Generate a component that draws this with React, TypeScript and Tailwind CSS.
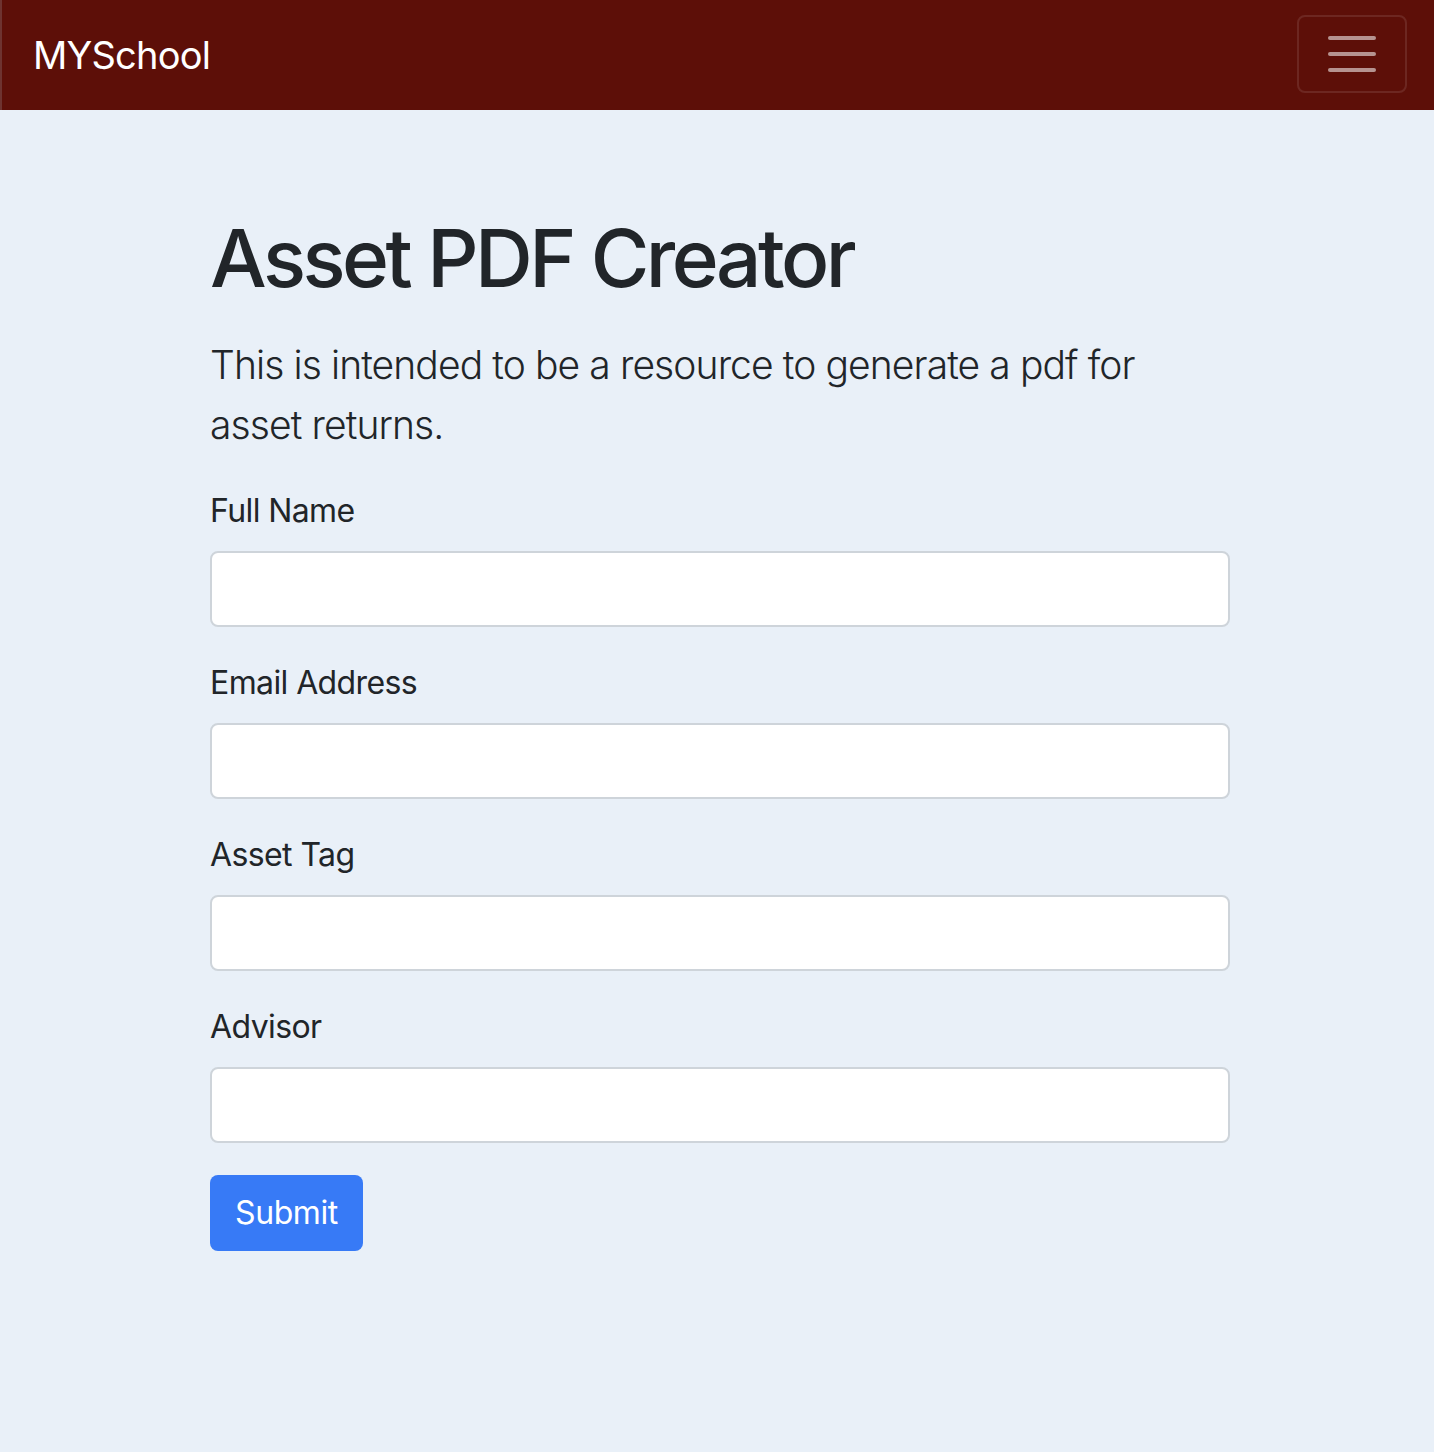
export default function App() {
  const fields = ['Full Name', 'Email Address', 'Asset Tag', 'Advisor'];

  return (
    <div className="min-h-screen bg-[#e9f0f8] text-[#212529] font-['Inter','Noto_Sans',sans-serif]">
      {/* Navbar */}
      <nav className="h-[110px] bg-[#5d0f08] border-l-2 border-[#6e3330] flex items-center justify-between pl-[31px] pr-[27px]">
        <span className="text-[38px] leading-none text-white tracking-[-0.8px]">MYSchool</span>
        <button className="w-[110px] h-[78px] -mt-[2px] rounded-[8px] border-2 border-white/10 flex flex-col items-center justify-center gap-[12px]">
          <span className="block w-[48px] h-[4px] rounded-full bg-white/55" />
          <span className="block w-[48px] h-[4px] rounded-full bg-white/55" />
          <span className="block w-[48px] h-[4px] rounded-full bg-white/55" />
        </button>
      </nav>

      {/* Main */}
      <main className="pl-[210px] pt-[100px] pb-[200px]">
        <div className="w-[1020px]">
          <h1 className="text-[80px] leading-[96px] font-medium tracking-[-3.5px] mb-[29px]">Asset PDF Creator</h1>
          <p className="max-w-[1000px] text-[39px] leading-[60px] font-light tracking-[-0.9px] mb-[32px]">
            This is intended to be a resource to generate a pdf for asset returns.
          </p>

          <form>
            {fields.map((f) => (
              <div key={f} className="mb-[32px]">
                <label className="block text-[32px] leading-[48px] mb-[16px] tracking-[-0.6px]">{f}</label>
                <input
                  type="text"
                  className="block w-full h-[76px] bg-white border-2 border-[#ced4da] rounded-[8px] px-[24px] text-[32px] outline-none"
                />
              </div>
            ))}
            <button
              type="button"
              className="h-[76px] px-[25px] rounded-[8px] bg-[#377af6] text-white text-[32px] leading-[48px] tracking-[-0.4px]"
            >
              Submit
            </button>
          </form>
        </div>
      </main>
    </div>
  );
}
